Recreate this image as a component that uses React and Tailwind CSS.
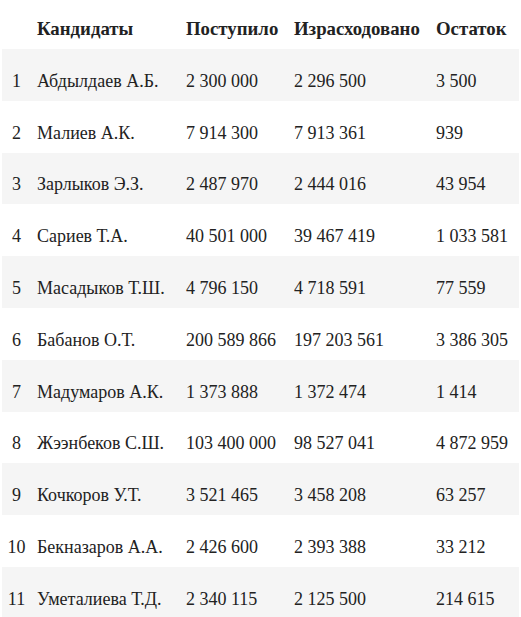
const rows = [
  ['1', 'Абдылдаев А.Б.', '2 300 000', '2 296 500', '3 500'],
  ['2', 'Малиев А.К.', '7 914 300', '7 913 361', '939'],
  ['3', 'Зарлыков Э.З.', '2 487 970', '2 444 016', '43 954'],
  ['4', 'Сариев Т.А.', '40 501 000', '39 467 419', '1 033 581'],
  ['5', 'Масадыков Т.Ш.', '4 796 150', '4 718 591', '77 559'],
  ['6', 'Бабанов О.Т.', '200 589 866', '197 203 561', '3 386 305'],
  ['7', 'Мадумаров А.К.', '1 373 888', '1 372 474', '1 414'],
  ['8', 'Жээнбеков С.Ш.', '103 400 000', '98 527 041', '4 872 959'],
  ['9', 'Кочкоров У.Т.', '3 521 465', '3 458 208', '63 257'],
  ['10', 'Бекназаров А.А.', '2 426 600', '2 393 388', '33 212'],
  ['11', 'Уметалиева Т.Д.', '2 340 115', '2 125 500', '214 615'],
]

export default function App() {
  return (
    <div className="px-[2px] bg-white text-[#222] text-[18px] leading-[20px] font-['Liberation_Serif','Times_New_Roman',serif]">
      <table className="w-[517px] table-fixed border-collapse">
        <colgroup>
          <col className="w-[29px]" />
          <col className="w-[149px]" />
          <col className="w-[108px]" />
          <col className="w-[142px]" />
          <col className="w-[89px]" />
        </colgroup>
        <thead>
          <tr className="h-[49px] font-bold text-[18.8px]">
            <th className="align-bottom pb-[10px]"></th>
            <th className="align-bottom pb-[10px] pl-[6px] text-left whitespace-nowrap">Кандидаты</th>
            <th className="align-bottom pb-[10px] pl-[6px] text-left whitespace-nowrap">Поступило</th>
            <th className="align-bottom pb-[10px] pl-[6px] text-left whitespace-nowrap">Израсходовано</th>
            <th className="align-bottom pb-[10px] pl-[6px] text-left whitespace-nowrap">Остаток</th>
          </tr>
        </thead>
        <tbody>
          {rows.map((r, i) => (
            <tr key={r[0]} className={i % 2 === 0 ? 'h-[51.8px] bg-[#f5f5f5]' : 'h-[51.8px] bg-white'}>
              <td className="align-bottom pb-[10px] text-center">{r[0]}</td>
              <td className="align-bottom pb-[10px] pl-[6px] whitespace-nowrap">{r[1]}</td>
              <td className="align-bottom pb-[10px] pl-[6px] whitespace-nowrap">{r[2]}</td>
              <td className="align-bottom pb-[10px] pl-[6px] whitespace-nowrap">{r[3]}</td>
              <td className="align-bottom pb-[10px] pl-[6px] whitespace-nowrap">{r[4]}</td>
            </tr>
          ))}
        </tbody>
      </table>
    </div>
  )
}
